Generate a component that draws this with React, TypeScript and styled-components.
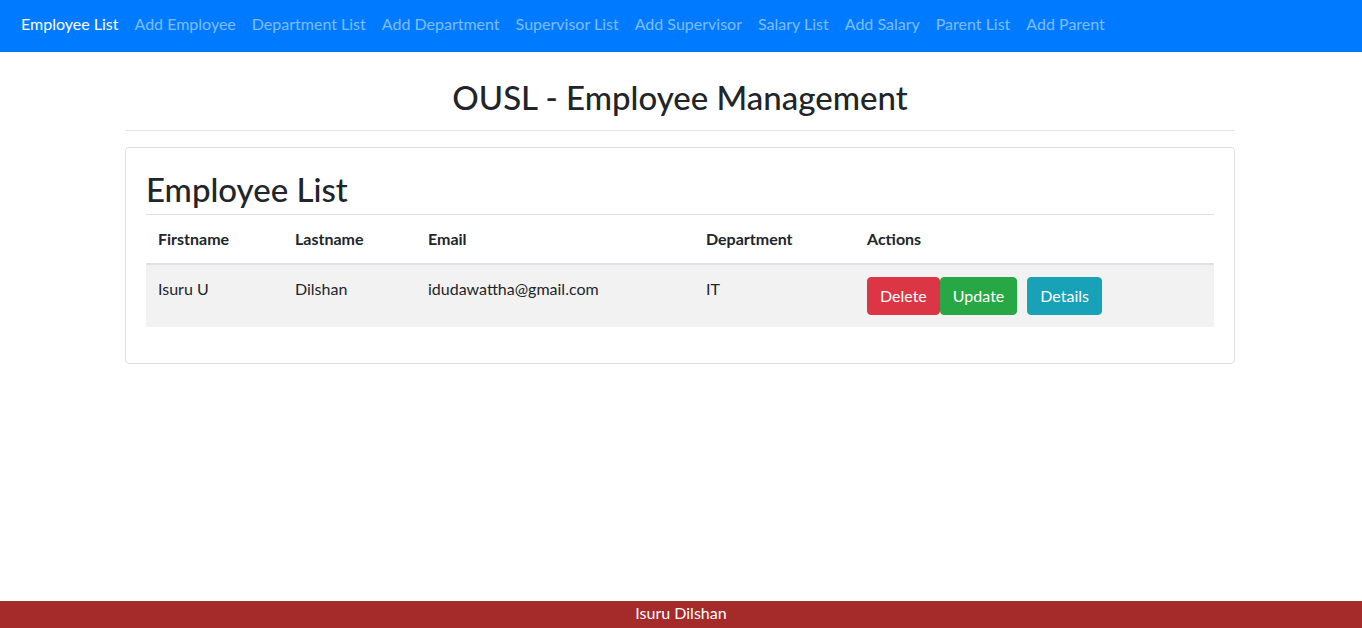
import React from "react";
import styled, { createGlobalStyle } from "styled-components";

const FONT = `Lato, "Noto Sans", "Liberation Sans", sans-serif`;

const GlobalStyle = createGlobalStyle`
  * { box-sizing: border-box; }
  html, body { margin: 0; padding: 0; }
  body {
    font-family: ${FONT};
    font-size: 16px;
    line-height: 1.5;
    color: #212529;
    background: #fff;
  }
`;

const Navbar = styled.nav`
  height: 52px;
  background: #007bff;
  display: flex;
  align-items: center;
  padding: 0 13px 4px;
`;

const NavList = styled.ul`
  list-style: none;
  margin: 0;
  padding: 0;
  display: flex;
`;

const NavLink = styled.a<{ $active?: boolean }>`
  display: block;
  padding: 8px;
  color: ${(p) => (p.$active ? "#ffffff" : "rgba(255,255,255,0.5)")};
  text-decoration: none;
  font-size: 16px;
  line-height: 24px;
`;

const Container = styled.main`
  width: 1140px;
  margin: 0 auto;
  padding: 24px 16px 0 14px;
`;

const PageTitle = styled.h2`
  margin: 0;
  padding-top: 2px;
  height: 38px;
  text-align: center;
  font-size: 33px;
  font-weight: 500;
  line-height: 38px;
`;

const Rule = styled.hr`
  margin: 16px 0;
  border: 0;
  border-top: 1px solid rgba(0, 0, 0, 0.1);
`;

const Card = styled.section`
  border: 1px solid rgba(0, 0, 0, 0.125);
  border-radius: 4px;
  padding: 20px;
`;

const CardTitle = styled.h2`
  margin: 0 0 8px;
  padding-top: 2px;
  height: 38px;
  font-size: 33px;
  font-weight: 500;
  line-height: 38px;
`;

const Table = styled.table`
  width: 100%;
  border-collapse: collapse;
  margin-bottom: 16px;
`;

const Th = styled.th<{ $w: number }>`
  width: ${(p) => p.$w}px;
  text-align: left;
  font-weight: 700;
  padding: 12px;
  line-height: 24px;
  border-top: 1px solid #dee2e6;
  border-bottom: 2px solid #dee2e6;
  vertical-align: bottom;
`;

const Tr = styled.tr<{ $striped?: boolean }>`
  background: ${(p) => (p.$striped ? "#f2f2f2" : "transparent")};
`;

const Td = styled.td`
  padding: 12px;
  line-height: 24px;
  vertical-align: top;
`;

const Actions = styled.div`
  display: flex;
  align-items: center;
`;

const Button = styled.button<{ $bg: string; $gap?: number }>`
  font-family: ${FONT};
  font-size: 16px;
  line-height: 24px;
  padding: 6px 12px;
  border: 1px solid ${(p) => p.$bg};
  border-radius: 4px;
  background: ${(p) => p.$bg};
  color: #fff;
  margin-left: ${(p) => p.$gap ?? 0}px;
  cursor: pointer;
`;

const Footer = styled.footer`
  position: fixed;
  left: 0;
  right: 0;
  bottom: 0;
  height: 27px;
  padding-bottom: 3px;
  background: #a52a2a;
  color: #fff;
  text-align: center;
  font-size: 16px;
  line-height: 24px;
`;

const navItems = [
  "Employee List",
  "Add Employee",
  "Department List",
  "Add Department",
  "Supervisor List",
  "Add Supervisor",
  "Salary List",
  "Add Salary",
  "Parent List",
  "Add Parent",
];

const columns: [string, number][] = [
  ["Firstname", 137],
  ["Lastname", 133],
  ["Email", 278],
  ["Department", 161],
  ["Actions", 359],
];

const employees = [
  { first: "Isuru U", last: "Dilshan", email: "idudawattha@gmail.com", dept: "IT" },
];

export default function App() {
  return (
    <>
      <GlobalStyle />
      <Navbar>
        <NavList>
          {navItems.map((n, i) => (
            <li key={n}>
              <NavLink href="#" $active={i === 0}>
                {n}
              </NavLink>
            </li>
          ))}
        </NavList>
      </Navbar>
      <Container>
        <PageTitle>OUSL - Employee Management</PageTitle>
        <Rule />
        <Card>
          <CardTitle>Employee List</CardTitle>
          <Table>
            <thead>
              <tr>
                {columns.map(([c, w]) => (
                  <Th key={c} $w={w}>
                    {c}
                  </Th>
                ))}
              </tr>
            </thead>
            <tbody>
              {employees.map((e, i) => (
                <Tr key={e.email} $striped={i % 2 === 0}>
                  <Td>{e.first}</Td>
                  <Td>{e.last}</Td>
                  <Td>{e.email}</Td>
                  <Td>{e.dept}</Td>
                  <Td>
                    <Actions>
                      <Button $bg="#dc3545">Delete</Button>
                      <Button $bg="#28a745">Update</Button>
                      <Button $bg="#17a2b8" $gap={10}>
                        Details
                      </Button>
                    </Actions>
                  </Td>
                </Tr>
              ))}
            </tbody>
          </Table>
        </Card>
      </Container>
      <Footer>Isuru Dilshan</Footer>
    </>
  );
}
